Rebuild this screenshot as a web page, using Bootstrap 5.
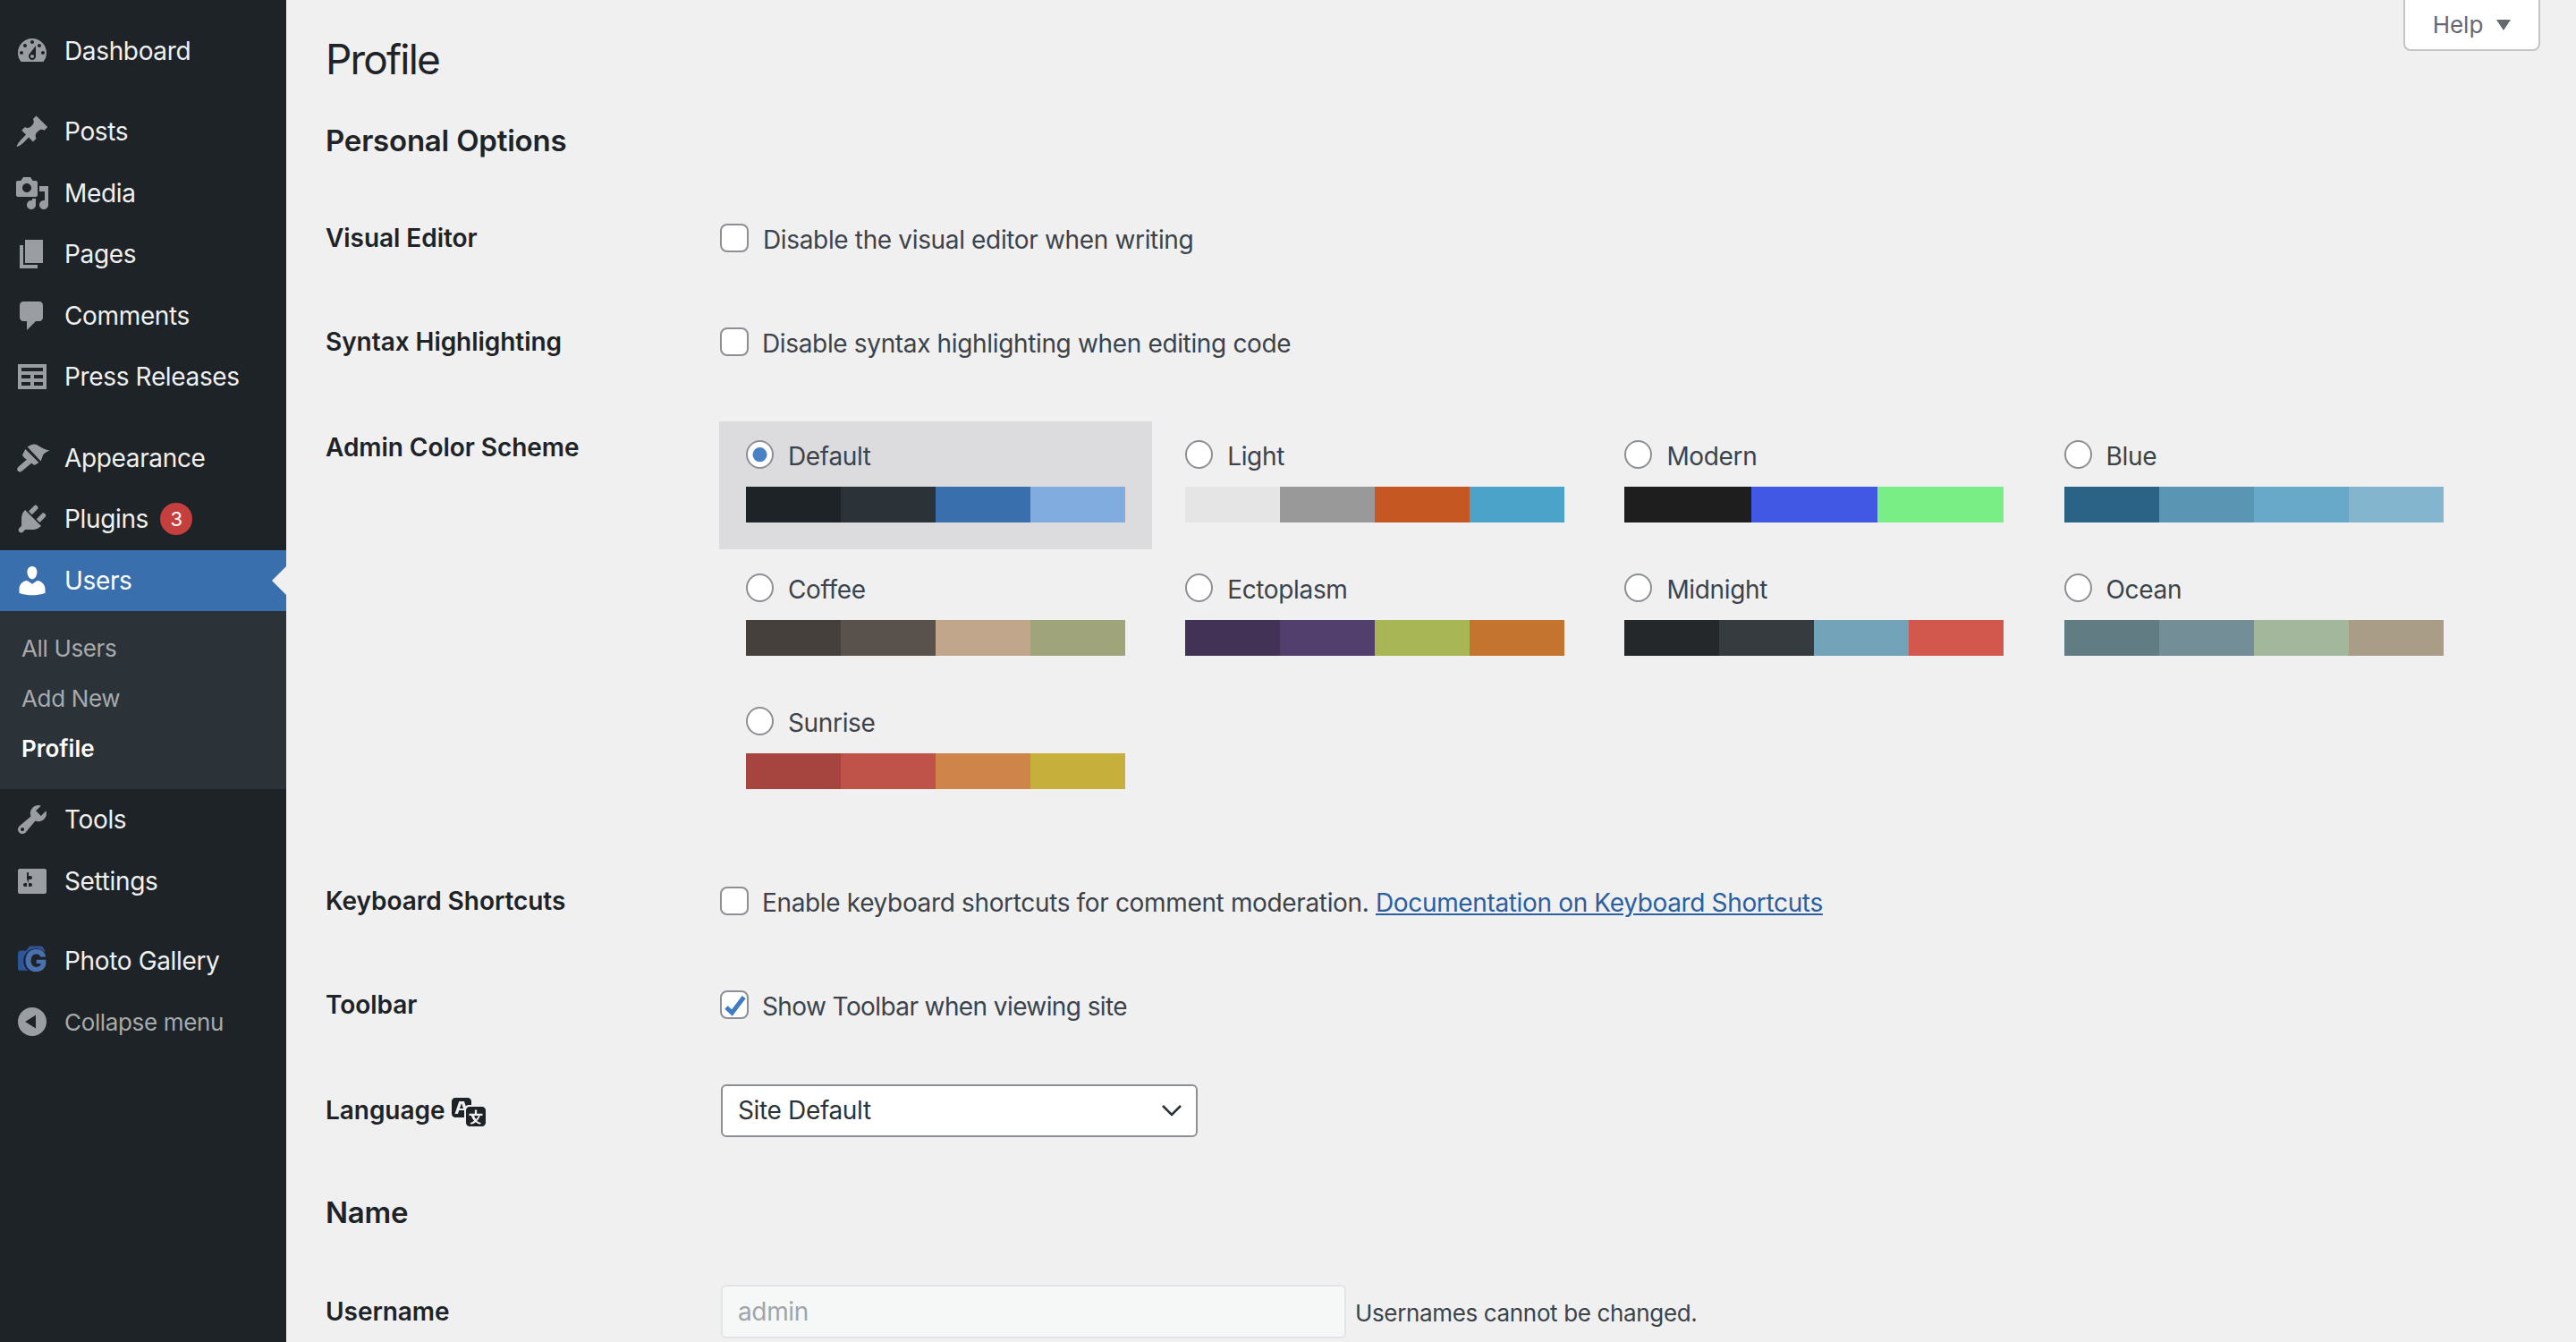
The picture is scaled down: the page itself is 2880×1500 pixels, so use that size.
<!DOCTYPE html>
<html lang="en">
<head>
    <meta charset="UTF-8">
    <title>Profile</title>
    <link rel="stylesheet" href="https://cdn.jsdelivr.net/npm/bootstrap@5.3.0/dist/css/bootstrap.min.css">
    <style>
        html, body { height: 100%; overflow: hidden; }
        body { background: #f0f0f1; color: #1d2327; font-family: Inter, "Liberation Sans", sans-serif; font-size: 28px; letter-spacing: -0.35px; }
        .wp-shell { height: 1500px; }

        /* sidebar */
        .wp-side { width: 320px; background: #1d2327; padding-top: 22.5px; flex-shrink: 0; }
        .side-item { height: 68.5px; color: #f0f0f1; font-size: 28px; text-decoration: none; position: relative; }
        .side-item:hover { color: #f0f0f1; }
        .side-icon { width: 40px; height: 40px; margin-left: 16px; margin-right: 16px; flex-shrink: 0; fill: #9a9ea3; }
        .side-gap { margin-top: 22px; }
        .side-gap.gap-tight { margin-top: 21px; }
        .side-item.is-active { background: #3a6fad; color: #fff; }
        .side-item.is-active .side-icon { fill: #fff; }
        .side-item.is-active::after { content: ""; position: absolute; right: 0; top: 18px; border: 16px solid transparent; border-right-color: #f0f0f1; border-left-width: 0; }
        .side-count { width: 36px; height: 36px; background: #c53f3f; color: #fff; font-size: 22px; margin-left: 13px; border-radius: 50%; }
        .side-sub { background: #2c3338; padding: 14px 0 17px 24px; }
        .side-sub a { display: block; height: 56px; line-height: 56px; font-size: 26px; color: #a7aaad; text-decoration: none; }
        .side-sub a.is-current { color: #fff; font-weight: 600; letter-spacing: 0; }
        .side-collapse { color: #a7aaad; font-size: 26px; height: 67.500px; }
        .side-collapse:hover { color: #a7aaad; }
        .side-logo-g { font-family: Inter, sans-serif; font-weight: 800; font-size: 17px; fill: #4a70b0; letter-spacing: 0; }

        /* main */
        .wp-main { padding-left: 44px; position: relative; }
        .help-tab { position: absolute; top: -2px; left: 2367px; width: 153px; height: 59px; background: #fff; border: 2px solid #c3c4c7; border-radius: 0 0 8px 8px; color: #646970; font-size: 26px; }
        .help-tab i { display: block; width: 0; margin-left: 15px; border: 8px solid transparent; border-top: 12px solid #646970; border-bottom-width: 0; }
        .pg-title { font-size: 46px; font-weight: 400; line-height: 60px; padding-top: 36px; margin: 0; letter-spacing: -1.8px; }
        .pg-head { font-size: 33px; font-weight: 600; line-height: 50px; margin: 36px 0 26px; letter-spacing: -0.2px; }
        .pg-head.head-name { margin: 31px 0 28px; }
        .opt-row { height: 116px; }
        .opt-row.row-lang { margin-top: 2px; }
        .opt-label { width: 440px; flex-shrink: 0; font-weight: 600; font-size: 28px; letter-spacing: -0.05px; }
        .opt-text { font-size: 28px; color: #3c434a; padding-top: 4px; }
        .opt-text.text-snug { margin-left: -1px; }
        .opt-text.text-tight { letter-spacing: -0.6px; }
        .opt-text a { color: #2b5fa0; }
        .form-check-input.opt-check { width: 32px; height: 32px; margin: 0 16px 0 1px; border: 2px solid #8c8f94; border-radius: 8px; background-color: #fff; box-shadow: none; }
        .form-check-input.opt-check:checked { background-color: #fff; border-color: #8c8f94; background-size: 28px; background-image: url("data:image/svg+xml,%3csvg xmlns='http://www.w3.org/2000/svg' viewBox='0 0 28 28'%3e%3cpath fill='none' stroke='%233f7cc4' stroke-width='5' d='M5 17l6.400 6L24.700 5.500'/%3e%3c/svg%3e"); }

        /* colour schemes */
        .scheme-row { height: 509px; padding-top: 31px; }
        .scheme-label { height: 58px; line-height: 58px; padding-top: 0; }
        .scheme-grid { display: grid; grid-template-columns: repeat(4, 484px); gap: 6px 7.2px; }
        .scheme-cell { height: 143px; padding: 21px 30px 0; }
        .scheme-cell.is-picked { background: #dcdcde; }
        .form-check-input.scheme-radio { width: 31px; height: 32px; margin: 0 16px 0 0; border: 2px solid #8c8f94; background-color: #fff; box-shadow: none; }
        .form-check-input.scheme-radio:checked { background-color: #fff; border-color: #8c8f94; background-size: 31px; background-image: url("data:image/svg+xml,%3csvg xmlns='http://www.w3.org/2000/svg' viewBox='0 0 31 31'%3e%3ccircle cx='15.5' cy='15.5' r='8' fill='%234a80c4'/%3e%3c/svg%3e"); }
        .scheme-name { font-size: 28px; color: #3c434a; height: 32px; line-height: 37px; }
        .scheme-bar { height: 40px; margin-top: 20px; }
        .scheme-bar span { flex: 1 1 0; }

        .form-select.lang-select { width: 533px; height: 59px; margin-left: 2px; border: 2px solid #8c8f94; border-radius: 6px; font-size: 28px; letter-spacing: -0.35px; color: #2c3338; padding: 0 40px 0 17px; background-position: right 15px center; background-size: 24px 14px; box-shadow: none; background-image: url("data:image/svg+xml,%3csvg xmlns='http://www.w3.org/2000/svg' viewBox='0 0 24 14'%3e%3cpath fill='none' stroke='%232c3338' stroke-width='2.6' d='M2 2l10 10L22 2'/%3e%3c/svg%3e"); }
        .lang-icon { width: 40px; height: 40px; margin-left: 8px; fill: #1d2327; }
        .form-control.user-field { width: 699px; height: 60px; margin-left: 2px; margin-right: 10px; border: 2px solid #e2e4e7; border-radius: 6px; background: #f6f7f7; font-size: 28px; letter-spacing: -0.35px; padding: 0 17px; box-shadow: none; font-family: inherit; }
        .form-control.user-field::placeholder { color: #a0a5aa; opacity: 1; }
        .user-note { font-size: 26px; color: #3c434a; padding-top: 3px; }
    </style>
</head>
<body>

<div class="wp-shell d-flex">

    <!-- admin menu -->
    <nav class="wp-side d-flex flex-column">
        <a class="side-item d-flex align-items-center" href="#"><svg class="side-icon" viewBox="0 0 20 20"><path d="M3.76 16h12.48c1.1-1.37 1.76-3.11 1.76-5 0-4.42-3.58-8-8-8s-8 3.58-8 8c0 1.89.66 3.63 1.76 5zM10 4c.55 0 1 .45 1 1s-.45 1-1 1-1-.45-1-1 .45-1 1-1zM6 6c.55 0 1 .45 1 1s-.45 1-1 1-1-.45-1-1 .45-1 1-1zm8 0c.55 0 1 .45 1 1s-.45 1-1 1-1-.45-1-1 .45-1 1-1zm-5.37 5.55L12 7v6c0 1.1-.9 2-2 2s-2-.9-2-2c0-.57.24-1.08.63-1.45zM4 10c.55 0 1 .45 1 1s-.45 1-1 1-1-.45-1-1 .45-1 1-1zm12 0c.55 0 1 .45 1 1s-.45 1-1 1-1-.45-1-1 .45-1 1-1zm-5 3c0-.55-.45-1-1-1s-1 .45-1 1 .45 1 1 1 1-.45 1-1z"/></svg>Dashboard</a>

        <a class="side-item side-gap d-flex align-items-center" href="#"><svg class="side-icon" viewBox="0 0 20 20"><path d="M10.44 3.02l1.82-1.82 6.36 6.35-1.83 1.82c-1.05-.68-2.48-.57-3.41.36l-.75.75c-.92.93-1.04 2.35-.35 3.41l-1.83 1.82-2.41-2.41-2.8 2.79c-.42.42-3.38 2.71-3.8 2.29s1.86-3.39 2.28-3.81l2.79-2.79L4.1 9.36l1.83-1.82c1.05.69 2.48.57 3.4-.36l.75-.75c.93-.92 1.05-2.35.36-3.41z"/></svg>Posts</a>
        <a class="side-item d-flex align-items-center" href="#"><svg class="side-icon" viewBox="0 0 20 20"><path d="M13 11V4c0-.55-.45-1-1-1h-1.67L9 1H5L3.67 3H2c-.55 0-1 .45-1 1v7c0 .55.45 1 1 1h10c.55 0 1-.45 1-1zM7 4.5c1.38 0 2.5 1.12 2.5 2.5S8.38 9.5 7 9.5 4.5 8.38 4.5 7 5.62 4.5 7 4.5zM14 6h5v10.5c0 1.38-1.12 2.5-2.5 2.5S14 17.88 14 16.5s1.12-2.5 2.5-2.5c.17 0 .34.02.5.05V9h-3V6zm-4 8.05V13h2v3.5c0 1.38-1.12 2.5-2.5 2.5S7 17.88 7 16.5 8.12 14 9.5 14c.17 0 .34.02.5.05z"/></svg>Media</a>
        <a class="side-item d-flex align-items-center" href="#"><svg class="side-icon" viewBox="0 0 20 20"><path d="M6 15V2h10v13H6zm-1 1h8v2H3V5h2v11z"/></svg>Pages</a>
        <a class="side-item d-flex align-items-center" href="#"><svg class="side-icon" viewBox="0 0 20 20"><path d="M5 2h9c1.1 0 2 .9 2 2v7c0 1.1-.9 2-2 2h-2l-5 5v-5H5c-1.1 0-2-.9-2-2V4c0-1.1.9-2 2-2z"/></svg>Comments</a>
        <a class="side-item d-flex align-items-center" href="#"><svg class="side-icon" viewBox="0 0 20 20"><path fill-rule="evenodd" d="M2 3h16v14H2zM4 5v2h12V5zM4 9v2h5V9zm7 0v2h5V9zM4 13v2h5v-2zm7 0v2h5v-2z"/></svg>Press Releases</a>

        <a class="side-item side-gap d-flex align-items-center" href="#"><svg class="side-icon" viewBox="0 0 20 20"><path d="M7.300 3.800C9 2.600 10 2.200 11.200 2.200c1.800 0 3.800 2.600 8.600 3.600-2 .8-3.600 1.700-4 3.200-.3 1-.6 1.800-1 2.700zM6.200 5l7.500 7.500-2 1.300c-.9.200-1.500-.3-2-1L4 17.500c-1 .5-2.200 0-2.400-1-.1-.5.1-1 .6-1.500L7 10.800c-1-.3-2-1.300-2.500-2.500z"/></svg>Appearance</a>
        <a class="side-item d-flex align-items-center" href="#"><svg class="side-icon" viewBox="0 0 20 20"><path d="M13.11 4.36L9.87 7.6 8 5.73l3.24-3.24c.35-.34 1.05-.2 1.56.32.52.51.66 1.21.31 1.55zm-8 1.77l.91-1.12 9.01 9.01-1.19.84c-.71.71-2.63 1.16-3.82 1.16H6.14L4.9 17.26c-.59.59-1.54.59-2.12 0-.59-.58-.59-1.53 0-2.12l1.24-1.24v-3.88c0-1.13.4-3.19 1.09-3.89zm7.26 3.97l3.24-3.24c.34-.35 1.04-.21 1.55.31.52.51.66 1.21.31 1.55l-3.24 3.25z"/></svg>Plugins<span class="side-count d-flex align-items-center justify-content-center">3</span></a>
        <a class="side-item is-active d-flex align-items-center" href="#"><svg class="side-icon" viewBox="0 0 20 20"><path d="M10 9.25c-2.27 0-2.73-3.44-2.73-3.44C7 4.02 7.82 2 9.97 2c2.16 0 2.98 2.02 2.71 3.81 0 0-.41 3.44-2.68 3.44zm0 2.57L12.72 10c2.39 0 4.52 2.33 4.52 4.53v2.49s-3.65 1.13-7.24 1.13c-3.65 0-7.24-1.13-7.24-1.13v-2.49c0-2.25 1.94-4.48 4.47-4.48z"/></svg>Users</a>
        <div class="side-sub">
            <a href="#">All Users</a>
            <a href="#">Add New</a>
            <a class="is-current" href="#">Profile</a>
        </div>
        <a class="side-item d-flex align-items-center" href="#"><svg class="side-icon" viewBox="0 0 20 20"><path d="M16.68 9.77c-1.34 1.34-3.3 1.67-4.95.99l-5.41 6.52c-.99.99-2.59.99-3.58 0s-.99-2.59 0-3.57l6.52-5.42c-.68-1.65-.35-3.61.99-4.95 1.28-1.28 3.12-1.62 4.72-1.06l-2.89 2.89 2.82 2.82 2.86-2.87c.53 1.58.18 3.39-1.08 4.65zM3.81 16.21c.4.39 1.04.39 1.43 0 .4-.4.4-1.04 0-1.43-.39-.4-1.03-.4-1.43 0-.39.39-.39 1.03 0 1.43z"/></svg>Tools</a>
        <a class="side-item d-flex align-items-center" href="#"><svg class="side-icon" viewBox="0 0 20 20"><path d="M18 16V4c0-.55-.45-1-1-1H3c-.55 0-1 .45-1 1v12c0 .55.45 1 1 1h14c.55 0 1-.45 1-1zM8 11h1c.55 0 1 .45 1 1s-.45 1-1 1H8v1.5c0 .28-.22.5-.5.5s-.5-.22-.5-.5V13H6c-.55 0-1-.45-1-1s.45-1 1-1h1V5.5c0-.28.22-.5.5-.5s.5.22.5.5V7h1c.55 0 1 .45 1 1s-.45 1-1 1h-1v5.5c0 .28-.22.5-.5.5s-.5-.22-.5-.5V9z"/></svg>Settings</a>

        <a class="side-item side-gap gap-tight d-flex align-items-center" href="#"><svg class="side-icon" viewBox="0 0 20 20"><path fill="#2f5597" d="M3.800 4.300h2.900l1.200-1.800c.3-.4.6-.7 1.200-.7h5.600c.7 0 1.100.3 1.400.8l1 1.700v3H8v8.100H3.600C2.600 15.700 2 15 2 14V6c0-1 .8-1.700 1.800-1.700z"/><circle cx="12" cy="10" r="6.900" fill="#1d2327"/><text class="side-logo-g" x="12" y="16.200" text-anchor="middle">G</text></svg>Photo Gallery</a>
        <a class="side-item side-collapse d-flex align-items-center" href="#"><svg class="side-icon" viewBox="0 0 20 20"><path fill-rule="evenodd" d="M18 10a8 8 0 1 1-16 0 8 8 0 0 1 16 0zM12 6.300v7.400L6.100 10z"/></svg>Collapse menu</a>
    </nav>

    <!-- content -->
    <main class="wp-main flex-grow-1">
        <button class="help-tab d-flex align-items-center justify-content-center" type="button">Help<i></i></button>

        <h1 class="pg-title">Profile</h1>
        <h2 class="pg-head">Personal Options</h2>

        <div class="opt-row d-flex align-items-center">
            <div class="opt-label">Visual Editor</div>
            <div class="d-flex align-items-center"><input class="form-check-input opt-check" type="checkbox"><span class="opt-text">Disable the visual editor when writing</span></div>
        </div>
        <div class="opt-row d-flex align-items-center">
            <div class="opt-label">Syntax Highlighting</div>
            <div class="d-flex align-items-center"><input class="form-check-input opt-check" type="checkbox"><span class="opt-text text-snug">Disable syntax highlighting when editing code</span></div>
        </div>

        <div class="scheme-row d-flex align-items-start">
            <div class="opt-label scheme-label">Admin Color Scheme</div>
            <div class="scheme-grid" id="scheme-grid"></div>
        </div>

        <div class="opt-row d-flex align-items-center">
            <div class="opt-label">Keyboard Shortcuts</div>
            <div class="d-flex align-items-center"><input class="form-check-input opt-check" type="checkbox"><span class="opt-text text-snug">Enable keyboard shortcuts for comment moderation. <a href="#">Documentation on Keyboard Shortcuts</a></span></div>
        </div>
        <div class="opt-row d-flex align-items-center">
            <div class="opt-label">Toolbar</div>
            <div class="d-flex align-items-center"><input class="form-check-input opt-check" type="checkbox" checked><span class="opt-text text-snug text-tight">Show Toolbar when viewing site</span></div>
        </div>
        <div class="opt-row row-lang d-flex align-items-center">
            <div class="opt-label d-flex align-items-center">Language<svg class="lang-icon" viewBox="0 0 20 20"><path d="M11 7H9.490c-.63 0-1.250.3-1.590.7L7 5H4.130l-2.390 7h1.690l.74-2H7v4H2c-1.100 0-2-.9-2-2V5c0-1.100.9-2 2-2h7c1.100 0 2 .9 2 2v2zM6.510 9H4.490l1-2.930zM10 8h7c1.100 0 2 .9 2 2v7c0 1.100-.9 2-2 2h-7c-1.100 0-2-.9-2-2v-7c0-1.100.9-2 2-2zm7.250 5v-1.080h-3.170V9.750h-1.160v2.170H9.750V13h1.150c.34 1.110.91 2.070 1.700 2.890-.6.48-1.380.87-2.330 1.190l.66.84c1.050-.34 1.890-.79 2.520-1.330.62.51 1.420.96 2.380 1.330l.62-.84c-.92-.3-1.680-.66-2.280-1.090.81-.87 1.340-1.870 1.620-2.990h.96zm-2.320 0c-.23.73-.63 1.400-1.210 2-.56-.58-.96-1.250-1.180-2h2.390z"/></svg></div>
            <select class="form-select lang-select"><option>Site Default</option></select>
        </div>

        <h2 class="pg-head head-name">Name</h2>

        <div class="opt-row d-flex align-items-center">
            <div class="opt-label">Username</div>
            <input class="form-control user-field" type="text" placeholder="admin" disabled>
            <span class="user-note">Usernames cannot be changed.</span>
        </div>
    </main>
</div>

<script src="https://cdn.jsdelivr.net/npm/bootstrap@5.3.0/dist/js/bootstrap.bundle.min.js"></script>
<script>
    let schemes = [
        { name: "Default", colors: ["#1d2327", "#2c3338", "#3a6fad", "#80ace0"], picked: true },
        { name: "Light", colors: ["#e5e5e5", "#999999", "#c55722", "#4ba3c9"] },
        { name: "Modern", colors: ["#1e1e1e", "#4058e4", "#79ee85"] },
        { name: "Blue", colors: ["#2b6386", "#5a96b4", "#68a8c9", "#84b5cf"] },
        { name: "Coffee", colors: ["#46403c", "#59524c", "#c2a68c", "#9fa47b"] },
        { name: "Ectoplasm", colors: ["#413256", "#523f6d", "#a8b655", "#c5742f"] },
        { name: "Midnight", colors: ["#25282b", "#363b3f", "#73a3b8", "#d2584d"] },
        { name: "Ocean", colors: ["#627c83", "#738e96", "#a3b79d", "#aa9d88"] },
        { name: "Sunrise", colors: ["#a6453f", "#c05349", "#cf854a", "#c6b03b"] }
    ];

    let grid = document.getElementById("scheme-grid");
    schemes.forEach(s => {
        let swatches = s.colors.map(c => `<span style="background:${c}"></span>`).join("");
        grid.innerHTML += `
            <div class="scheme-cell ${s.picked ? "is-picked" : ""}">
                <div class="d-flex align-items-center">
                    <input class="form-check-input scheme-radio" type="radio" name="scheme" ${s.picked ? "checked" : ""}>
                    <span class="scheme-name">${s.name}</span>
                </div>
                <div class="scheme-bar d-flex">${swatches}</div>
            </div>`;
    });
</script>
</body>
</html>
